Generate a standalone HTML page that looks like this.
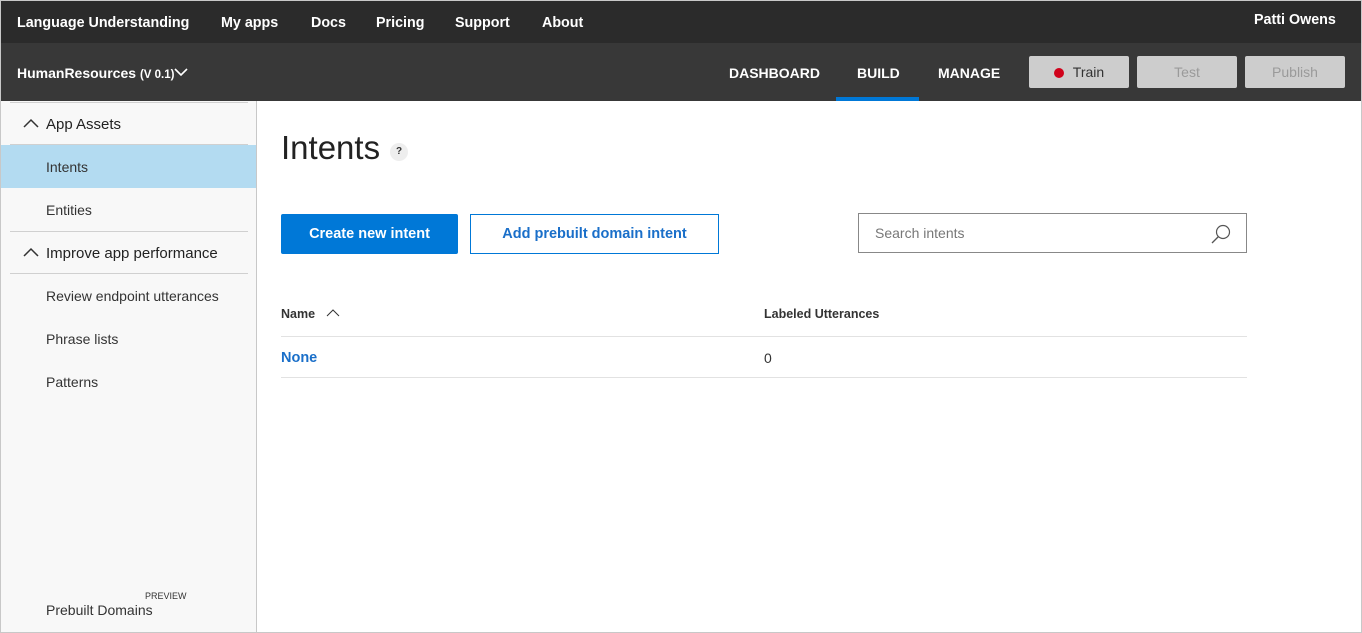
<!DOCTYPE html>
<html><head><style>
*{margin:0;padding:0;box-sizing:border-box}
body{width:1362px;height:633px;overflow:hidden;font-family:"Liberation Sans",sans-serif;background:#fff;position:relative}
.a{position:absolute;white-space:nowrap}
.frame{position:absolute;left:0;top:0;width:1362px;height:633px;border:1px solid #c8c8c8;border-top:none;pointer-events:none}
.top{position:absolute;left:0;top:0;width:1362px;height:43px;background:#2b2b2b;border:1px solid #c8c8c8;border-bottom:none}
.tn{color:#fff;font-weight:bold;font-size:14.3px;top:15px}
.bar{position:absolute;left:0;top:43px;width:1362px;height:58px;background:#383838}
.sn{color:#fff;font-weight:bold;font-size:14px;top:65px}
.btn{position:absolute;top:56px;height:32px;width:100px;background:#cdcdcd;border-radius:2px;font-size:14px;text-align:center;line-height:32px;color:#9a9a9a}
.side{position:absolute;left:1px;top:101px;width:256px;height:531px;background:#f8f8f8;border-right:1px solid #c8c8c8}
.si{font-size:14px;color:#333;left:46px}
.hr{position:absolute;left:10px;width:238px;height:1px;background:#d0d0d0}
</style></head><body>
<div class="top"></div>
<span class="a tn" style="left:17px">Language Understanding</span>
<span class="a tn" style="left:221px">My apps</span>
<span class="a tn" style="left:311px">Docs</span>
<span class="a tn" style="left:376px">Pricing</span>
<span class="a tn" style="left:455px">Support</span>
<span class="a tn" style="left:542px">About</span>
<span class="a tn" style="left:1254px;top:12px">Patti Owens</span>
<div class="bar"></div>
<span class="a" style="left:17px;top:65px;color:#fff;font-weight:bold;font-size:14px">HumanResources <span style="font-size:11.5px">(V 0.1)</span></span>
<svg class="a" style="left:174px;top:68px" width="14" height="9"><path d="M1 1 L7 7 L13 1" stroke="#fff" stroke-width="1.6" fill="none"/></svg>
<span class="a sn" style="left:729px">DASHBOARD</span>
<span class="a sn" style="left:857px">BUILD</span>
<span class="a sn" style="left:938px">MANAGE</span>
<div class="a" style="left:836px;top:97px;width:83px;height:4px;background:#0078d7"></div>
<div class="btn" style="left:1029px;color:#333"><span style="display:inline-block;width:10px;height:10px;border-radius:50%;background:#d0021b;margin-right:9px;vertical-align:-1px"></span>Train</div>
<div class="btn" style="left:1137px">Test</div>
<div class="btn" style="left:1245px">Publish</div>
<div class="side"></div>
<div class="hr" style="top:102px"></div>
<svg class="a" style="left:23px;top:118px" width="16" height="10"><path d="M1 9 L8 2 L15 9" stroke="#333" stroke-width="1.5" fill="none"/></svg>
<span class="a" style="left:46px;top:116px;font-size:15px;color:#222">App Assets</span>
<div class="hr" style="top:144px"></div>
<div class="a" style="left:1px;top:145px;width:255px;height:43px;background:#b3dbf1"></div>
<span class="a si" style="top:159px">Intents</span>
<span class="a si" style="top:202px">Entities</span>
<div class="hr" style="top:231px"></div>
<svg class="a" style="left:23px;top:247px" width="16" height="10"><path d="M1 9 L8 2 L15 9" stroke="#333" stroke-width="1.5" fill="none"/></svg>
<span class="a" style="left:46px;top:245px;font-size:15px;color:#222">Improve app performance</span>
<div class="hr" style="top:273px"></div>
<span class="a si" style="top:288px">Review endpoint utterances</span>
<span class="a si" style="top:331px">Phrase lists</span>
<span class="a si" style="top:374px">Patterns</span>
<span class="a" style="left:145px;top:591px;font-size:9px;color:#333">PREVIEW</span>
<span class="a si" style="top:602px">Prebuilt Domains</span>
<span class="a" style="left:281px;top:129px;font-size:33px;color:#222;font-weight:300">Intents</span>
<div class="a" style="left:390px;top:143px;width:18px;height:18px;border-radius:50%;background:#eee;font-size:10px;font-weight:bold;text-align:center;line-height:18px;color:#333">?</div>
<div class="a" style="left:281px;top:214px;width:177px;height:40px;background:#0078d7;border-radius:2px;color:#fff;font-weight:bold;font-size:14.5px;text-align:center;line-height:40px">Create new intent</div>
<div class="a" style="left:470px;top:214px;width:249px;height:40px;border:1px solid #0078d7;color:#1a6fc9;font-weight:bold;font-size:14.5px;text-align:center;line-height:39px">Add prebuilt domain intent</div>
<div class="a" style="left:858px;top:213px;width:389px;height:40px;border:1px solid #888;font-size:14px;color:#777;padding-left:16px;line-height:39px">Search intents</div>
<svg class="a" style="left:1209px;top:222px" width="24" height="24"><circle cx="14" cy="10" r="6.5" stroke="#555" stroke-width="1.2" fill="none"/><path d="M9.5 14.5 L3 21" stroke="#555" stroke-width="1.3"/></svg>
<span class="a" style="left:281px;top:307px;font-size:12.5px;font-weight:bold;color:#333">Name</span>
<svg class="a" style="left:326px;top:308px" width="14" height="9"><path d="M1 8 L7 2 L13 8" stroke="#333" stroke-width="1" fill="none"/></svg>
<span class="a" style="left:764px;top:307px;font-size:12.5px;font-weight:bold;color:#333">Labeled Utterances</span>
<div class="a" style="left:281px;top:336px;width:966px;height:1px;background:#e2e2e2"></div>
<span class="a" style="left:281px;top:350px;font-size:14.5px;color:#1a6fc9;font-weight:bold">None</span>
<span class="a" style="left:764px;top:350px;font-size:14px;color:#333">0</span>
<div class="a" style="left:281px;top:377px;width:966px;height:1px;background:#e2e2e2"></div>
<div class="frame"></div>
</body></html>
